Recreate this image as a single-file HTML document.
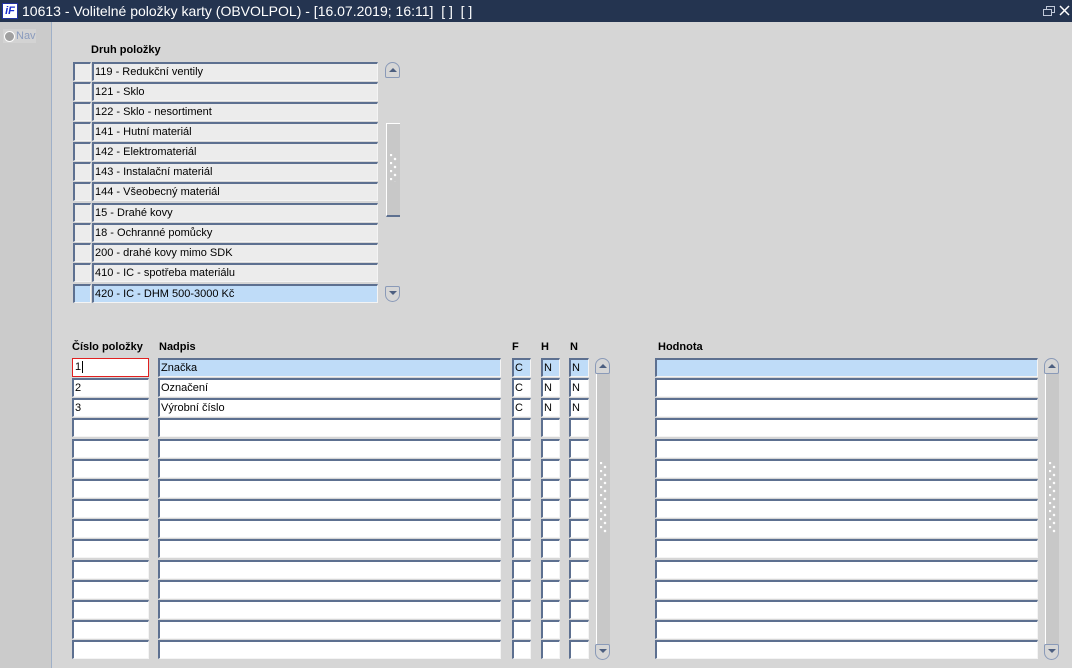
<!DOCTYPE html>
<html><head><meta charset="utf-8"><style>
*{margin:0;padding:0;box-sizing:border-box}
body{width:1072px;height:668px;overflow:hidden;background:#d6d6d6;font-family:"Liberation Sans",Arial,sans-serif;font-size:11px;color:#000;position:relative}
.tb{position:absolute;left:0;top:0;width:1072px;height:22px;background:#243450;color:#fff;font-size:14px;line-height:22px;padding-left:22px}
.logo{position:absolute;left:2px;top:3px;width:16px;height:16px;background:#fff;border:1px solid #2030a0;color:#1a2ed0;font:bold italic 11px/14px "Liberation Sans",sans-serif;text-align:center}
.lp{position:absolute;left:0;top:22px;width:52px;height:646px;background:#cbcbcb;border-right:1px solid #9fb0c8}
.nav{position:absolute;left:3px;top:7px;width:33px;height:14px;background:#d3d3d3;color:#8a9bbd;font-size:11px;line-height:14px;padding-left:13px}
.nav:before{content:"";position:absolute;left:1px;top:2px;width:9px;height:9px;border-radius:50%;background:#a0a0a0;border:1px solid #fff}
.f{position:absolute;height:19px;background:#fff;border-top:2px solid #5d7090;border-left:2px solid #5d7090;border-right:1px solid #f4f4f4;border-bottom:1px solid #f4f4f4;line-height:16px;padding-left:1px;white-space:nowrap;overflow:hidden}
.g{background:#ececec}
.s{background:#bfdcf8}
.h{position:absolute;font-weight:bold;font-size:11px}
.sb{position:absolute;width:14px;background:#c8c8c8;border-left:1px solid #fff}
.btn{position:absolute;width:15px;height:16px;border:1px solid #8a9ab8;background:#d6d6d6}
.up{border-radius:8px 8px 2px 2px}
.dn{border-radius:2px 2px 8px 8px}
.up:after{content:"";position:absolute;left:3px;top:5px;border-left:4px solid transparent;border-right:4px solid transparent;border-bottom:4px solid #4d5f80}
.dn:after{content:"";position:absolute;left:3px;top:4px;border-left:4px solid transparent;border-right:4px solid transparent;border-top:4px solid #4d5f80}
.dots{position:absolute;left:3px;width:8px;background-image:radial-gradient(circle at 1px 1px,#fff 1px,transparent 1.5px),radial-gradient(circle at 5px 5px,#fff 1px,transparent 1.5px);background-size:8px 8px}
</style></head><body>
<div class="tb"><div class="logo">iF</div>10613 - Volitelné položky karty (OBVOLPOL) - [16.07.2019; 16:11]&nbsp; [ ]&nbsp; [ ]
<svg style="position:absolute;left:1043px;top:6px" width="12" height="11"><rect x="3.5" y="0.5" width="8" height="6" fill="none" stroke="#c0c8d8"/><rect x="0.5" y="3.5" width="8" height="6" fill="#243450" stroke="#c0c8d8"/></svg>
<svg style="position:absolute;left:1059px;top:5px" width="11" height="11"><path d="M1 1L10 10M10 1L1 10" stroke="#fff" stroke-width="1.5"/></svg>
</div>
<div class="lp"><div class="nav">Nav</div></div>

<div class="h" style="left:91px;top:44px">Druh položky</div>
<div class="f g" style="left:73px;top:62px;width:18px"></div><div class="f g" style="left:92px;top:62px;width:286px">119 - Redukční ventily</div>
<div class="f g" style="left:73px;top:82px;width:18px"></div><div class="f g" style="left:92px;top:82px;width:286px">121 - Sklo</div>
<div class="f g" style="left:73px;top:102px;width:18px"></div><div class="f g" style="left:92px;top:102px;width:286px">122 - Sklo - nesortiment</div>
<div class="f g" style="left:73px;top:122px;width:18px"></div><div class="f g" style="left:92px;top:122px;width:286px">141 - Hutní materiál</div>
<div class="f g" style="left:73px;top:142px;width:18px"></div><div class="f g" style="left:92px;top:142px;width:286px">142 - Elektromateriál</div>
<div class="f g" style="left:73px;top:162px;width:18px"></div><div class="f g" style="left:92px;top:162px;width:286px">143 - Instalační materiál</div>
<div class="f g" style="left:73px;top:182px;width:18px"></div><div class="f g" style="left:92px;top:182px;width:286px">144 - Všeobecný materiál</div>
<div class="f g" style="left:73px;top:203px;width:18px"></div><div class="f g" style="left:92px;top:203px;width:286px">15 - Drahé kovy</div>
<div class="f g" style="left:73px;top:223px;width:18px"></div><div class="f g" style="left:92px;top:223px;width:286px">18 - Ochranné pomůcky</div>
<div class="f g" style="left:73px;top:243px;width:18px"></div><div class="f g" style="left:92px;top:243px;width:286px">200 - drahé kovy mimo SDK</div>
<div class="f g" style="left:73px;top:263px;width:18px"></div><div class="f g" style="left:92px;top:263px;width:286px">410 - IC - spotřeba materiálu</div>
<div class="f s" style="left:73px;top:284px;width:18px"></div><div class="f s" style="left:92px;top:284px;width:286px">420 - IC - DHM 500-3000 Kč</div>
<div class="btn up" style="left:385px;top:62px"></div>
<div class="sb" style="left:386px;top:123px;height:94px;border-top:1px solid #fff;border-bottom:2px solid #5d7090"><div class="dots" style="top:30px;height:28px"></div></div>
<div class="btn dn" style="left:385px;top:286px"></div>

<div class="h" style="left:72px;top:341px">Číslo položky</div>
<div class="h" style="left:159px;top:341px">Nadpis</div>
<div class="h" style="left:512px;top:341px">F</div>
<div class="h" style="left:541px;top:341px">H</div>
<div class="h" style="left:570px;top:341px">N</div>
<div class="h" style="left:658px;top:341px">Hodnota</div>

<div class="f" style="left:72px;top:358px;width:77px;border:1px solid #e02020;background:#fff;padding-left:2px">1<span style="border-left:1px solid #000;margin-left:1px"></span></div>
<div class="f s" style="left:158px;top:358px;width:343px">Značka</div>
<div class="f s" style="left:512px;top:358px;width:19px">C</div><div class="f s" style="left:541px;top:358px;width:19px">N</div><div class="f s" style="left:569px;top:358px;width:20px">N</div>
<div class="f s" style="left:655px;top:358px;width:383px"></div>

<div class="f" style="left:72px;top:378px;width:77px">2</div><div class="f" style="left:158px;top:378px;width:343px">Označení</div>
<div class="f" style="left:512px;top:378px;width:19px">C</div><div class="f" style="left:541px;top:378px;width:19px">N</div><div class="f" style="left:569px;top:378px;width:20px">N</div><div class="f" style="left:655px;top:378px;width:383px"></div>
<div class="f" style="left:72px;top:398px;width:77px">3</div><div class="f" style="left:158px;top:398px;width:343px">Výrobní číslo</div>
<div class="f" style="left:512px;top:398px;width:19px">C</div><div class="f" style="left:541px;top:398px;width:19px">N</div><div class="f" style="left:569px;top:398px;width:20px">N</div><div class="f" style="left:655px;top:398px;width:383px"></div>

<div class="f" style="left:72px;top:418px;width:77px"></div><div class="f" style="left:158px;top:418px;width:343px"></div><div class="f" style="left:512px;top:418px;width:19px"></div><div class="f" style="left:541px;top:418px;width:19px"></div><div class="f" style="left:569px;top:418px;width:20px"></div><div class="f" style="left:655px;top:418px;width:383px"></div>
<div class="f" style="left:72px;top:439px;width:77px"></div><div class="f" style="left:158px;top:439px;width:343px"></div><div class="f" style="left:512px;top:439px;width:19px"></div><div class="f" style="left:541px;top:439px;width:19px"></div><div class="f" style="left:569px;top:439px;width:20px"></div><div class="f" style="left:655px;top:439px;width:383px"></div>
<div class="f" style="left:72px;top:459px;width:77px"></div><div class="f" style="left:158px;top:459px;width:343px"></div><div class="f" style="left:512px;top:459px;width:19px"></div><div class="f" style="left:541px;top:459px;width:19px"></div><div class="f" style="left:569px;top:459px;width:20px"></div><div class="f" style="left:655px;top:459px;width:383px"></div>
<div class="f" style="left:72px;top:479px;width:77px"></div><div class="f" style="left:158px;top:479px;width:343px"></div><div class="f" style="left:512px;top:479px;width:19px"></div><div class="f" style="left:541px;top:479px;width:19px"></div><div class="f" style="left:569px;top:479px;width:20px"></div><div class="f" style="left:655px;top:479px;width:383px"></div>
<div class="f" style="left:72px;top:499px;width:77px"></div><div class="f" style="left:158px;top:499px;width:343px"></div><div class="f" style="left:512px;top:499px;width:19px"></div><div class="f" style="left:541px;top:499px;width:19px"></div><div class="f" style="left:569px;top:499px;width:20px"></div><div class="f" style="left:655px;top:499px;width:383px"></div>
<div class="f" style="left:72px;top:519px;width:77px"></div><div class="f" style="left:158px;top:519px;width:343px"></div><div class="f" style="left:512px;top:519px;width:19px"></div><div class="f" style="left:541px;top:519px;width:19px"></div><div class="f" style="left:569px;top:519px;width:20px"></div><div class="f" style="left:655px;top:519px;width:383px"></div>
<div class="f" style="left:72px;top:539px;width:77px"></div><div class="f" style="left:158px;top:539px;width:343px"></div><div class="f" style="left:512px;top:539px;width:19px"></div><div class="f" style="left:541px;top:539px;width:19px"></div><div class="f" style="left:569px;top:539px;width:20px"></div><div class="f" style="left:655px;top:539px;width:383px"></div>
<div class="f" style="left:72px;top:560px;width:77px"></div><div class="f" style="left:158px;top:560px;width:343px"></div><div class="f" style="left:512px;top:560px;width:19px"></div><div class="f" style="left:541px;top:560px;width:19px"></div><div class="f" style="left:569px;top:560px;width:20px"></div><div class="f" style="left:655px;top:560px;width:383px"></div>
<div class="f" style="left:72px;top:580px;width:77px"></div><div class="f" style="left:158px;top:580px;width:343px"></div><div class="f" style="left:512px;top:580px;width:19px"></div><div class="f" style="left:541px;top:580px;width:19px"></div><div class="f" style="left:569px;top:580px;width:20px"></div><div class="f" style="left:655px;top:580px;width:383px"></div>
<div class="f" style="left:72px;top:600px;width:77px"></div><div class="f" style="left:158px;top:600px;width:343px"></div><div class="f" style="left:512px;top:600px;width:19px"></div><div class="f" style="left:541px;top:600px;width:19px"></div><div class="f" style="left:569px;top:600px;width:20px"></div><div class="f" style="left:655px;top:600px;width:383px"></div>
<div class="f" style="left:72px;top:620px;width:77px"></div><div class="f" style="left:158px;top:620px;width:343px"></div><div class="f" style="left:512px;top:620px;width:19px"></div><div class="f" style="left:541px;top:620px;width:19px"></div><div class="f" style="left:569px;top:620px;width:20px"></div><div class="f" style="left:655px;top:620px;width:383px"></div>
<div class="f" style="left:72px;top:640px;width:77px"></div><div class="f" style="left:158px;top:640px;width:343px"></div><div class="f" style="left:512px;top:640px;width:19px"></div><div class="f" style="left:541px;top:640px;width:19px"></div><div class="f" style="left:569px;top:640px;width:20px"></div><div class="f" style="left:655px;top:640px;width:383px"></div>

<div class="sb" style="left:596px;top:366px;height:284px"><div class="dots" style="top:96px;height:72px"></div></div>
<div class="btn up" style="left:595px;top:358px"></div>
<div class="btn dn" style="left:595px;top:644px"></div>
<div class="sb" style="left:1045px;top:366px;height:284px"><div class="dots" style="top:96px;height:72px"></div></div>
<div class="btn up" style="left:1044px;top:358px"></div>
<div class="btn dn" style="left:1044px;top:644px"></div>
</body></html>
